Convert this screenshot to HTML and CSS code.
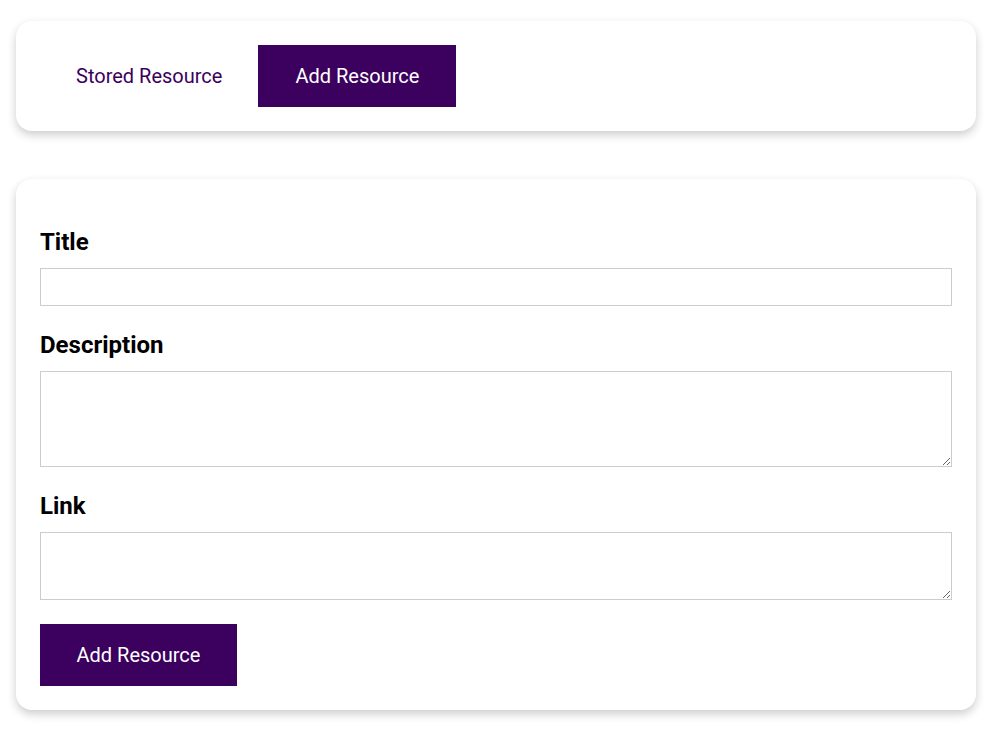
FILE: index.html
```html
<!DOCTYPE html>
<html lang="en">
<head>
<meta charset="utf-8">
<title>Resources</title>
<link rel="stylesheet" href="styles.css">
</head>
<body>
<div class="page">
  <nav class="card tabs">
    <button class="tab" type="button">Stored Resource</button>
    <button class="tab active" type="button">Add Resource</button>
  </nav>
  <form class="card form">
    <label class="label" for="title">Title</label>
    <input class="field title-field" id="title" type="text">
    <label class="label" for="desc">Description</label>
    <textarea class="field desc-field" id="desc"></textarea>
    <label class="label" for="link">Link</label>
    <textarea class="field link-field" id="link"></textarea>
    <button class="submit" type="button">Add Resource</button>
  </form>
</div>
</body>
</html>
```

FILE: styles.css
```css
* { box-sizing: border-box; }
html, body { margin: 0; padding: 0; background: #fff; }
body { font-family: Roboto, "Liberation Sans", sans-serif; }
.page {
  width: 960px;
  margin-left: 16px;
  padding-top: 21px;
  padding-bottom: 20px;
  display: flex;
  flex-direction: column;
  gap: 48px;
}
.card {
  background: #fff;
  border-radius: 16px;
  box-shadow: 0 4px 10px rgba(0, 0, 0, 0.2);
  padding: 24px;
}
.tabs {
  display: flex;
  height: 110px;
}
.tab {
  font-family: inherit;
  font-size: 20px;
  line-height: 22px;
  padding: 20px 36px;
  height: 62px;
  border: none;
  background: transparent;
  color: #3c005e;
  cursor: pointer;
}
.tab.active {
  background: #3c005e;
  color: #fff;
  padding: 20px 37px;
}
.form {
  display: flex;
  flex-direction: column;
  align-items: flex-start;
  padding-bottom: 24px;
}
.label {
  display: block;
  font-size: 24px;
  line-height: 28px;
  font-weight: 700;
  color: #000;
  margin: 25px 0 12px;
}
.field {
  display: block;
  width: 100%;
  border: 1px solid #cccccc;
  border-radius: 0;
  font-family: inherit;
  font-size: 16px;
  margin: 0;
  padding: 6px 8px;
  background: #fff;
}
.title-field { height: 38px; }
.desc-field { height: 96px; }
.link-field { height: 68px; }
.submit {
  margin-top: 24px;
  font-family: inherit;
  font-size: 20px;
  line-height: 22px;
  padding: 20px 36.5px;
  height: 62px;
  border: none;
  background: #3c005e;
  color: #fff;
  cursor: pointer;
}
```
